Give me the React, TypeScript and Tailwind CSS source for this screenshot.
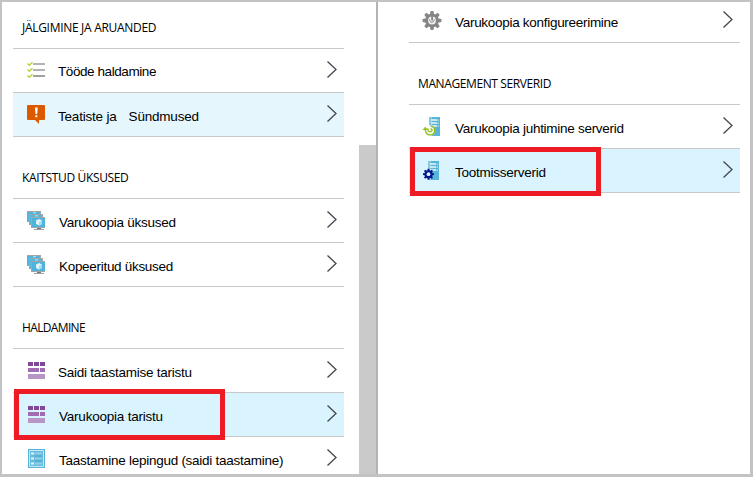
import type { ReactNode } from "react";

function ChecklistIcon() {
  return (
    <svg width="20" height="20" viewBox="0 0 20 20" fill="none">
      {[2, 8, 14].map((y) => (
        <g key={y}>
          <path d={`M1.500 ${y + 0.6}l1.800 1.700L6.500 ${y - 0.8}`} stroke="#b8d532" strokeWidth="1.4" />
          <path d={`M7 ${y + 1}h12`} stroke={y === 14 ? "#a0a0a0" : "#b4b4b4"} strokeWidth="2" />
        </g>
      ))}
    </svg>
  );
}

function AlertIcon() {
  return (
    <svg width="20" height="20" viewBox="0 0 20 20">
      <path d="M2 0h16a1 1 0 0 1 1 1v13a1 1 0 0 1-1 1h-5v4l-4-4H2a1 1 0 0 1-1-1V1a1 1 0 0 1 1-1z" fill="#dd5900" />
      <path d="M8.900 2.500h2.900l-.6 6.500H9.500zM9.300 10.200h2v2h-2z" fill="#fff" />
    </svg>
  );
}

function MonitorsIcon() {
  return (
    <svg width="20" height="20" viewBox="0 0 20 20">
      <path d="M1 0h14v11H1z" fill="#a3a6a8" />
      <path d="M1 1h13v9H1z" fill="#4fb4dc" />
      <path d="M3 3h14v11H3z" fill="#a3a6a8" />
      <path d="M4 4h12v9H4z" fill="#59b4d9" />
      <path d="M7 1.700h3M9 4.900h3" stroke="#bfe6f4" />
      <path d="M5 6h14v11H5z" fill="#a3a6a8" />
      <path d="M6 7h13v9H6z" fill="#4fb4dc" />
      <path d="M13 8l3 1.500v3.400l-3 1.500-3-1.500V9.500z" fill="#e0f4fb" />
      <path d="M13 11l3-1.500v3.400l-3 1.500z" fill="#a9dcef" />
      <path d="M11 17h4v1h-4z" fill="#74787b" />
      <path d="M8 18h10v1H8z" fill="#9da0a2" />
    </svg>
  );
}

function BlocksIcon() {
  return (
    <svg width="20" height="20" viewBox="0 0 20 20">
      <path d="M2 1h5v4H2zM8 1h5v4H8zM14 1h5v4h-5z" fill="#804998" />
      <path d="M2 7h11v4H2zM14 7h5v4h-5z" fill="#a06db3" />
      <path d="M2 13h17v5H2z" fill="#b796c6" />
    </svg>
  );
}

function PlanIcon() {
  return (
    <svg width="20" height="20" viewBox="0 0 20 20">
      <path d="M2 0h17v19H2z" fill="#59b4d9" />
      <path d="M3.500 1.500h14v16h-14z" fill="#6bbddd" stroke="#c5e7f3" />
      <path d="M5 4.500h3M5 9.500h3M5 14.500h3" stroke="#e0f4fa" strokeWidth="2" />
      <path d="M9 4.500h7M9 9.500h7M9 14.500h7" stroke="#8fcfe8" strokeWidth="2" />
      <path d="M9 7h7M9 12h7" stroke="#3fa3cd" />
    </svg>
  );
}

function GearIcon() {
  return (
    <svg width="20" height="20" viewBox="0 0 20 20">
      <g transform="translate(10 9.500)" fill="#858585">
        {[0, 45, 90, 135, 180, 225, 270, 315].map((a) => (
          <path key={a} d="M-2.200-5.500L-1.400-9.400H1.400L2.200-5.500z" transform={`rotate(${a})`} />
        ))}
        <circle r="6.8" />
        <circle r="3.9" fill="#f2f2f2" />
        <path d="M-.8-4.400H1V0H-.8z" />
        <path d="M-2.300-1.200a2.300 2.300 0 1 0 4.400 0" fill="none" stroke="#858585" strokeWidth="1" />
      </g>
    </svg>
  );
}

function ServerBody() {
  return (
    <>
      <path d="M7 0h11v19H7z" fill="#59b4d9" />
      <path d="M7 0h3v19H7z" fill="#85c9e3" />
      <path d="M9 3h8M9 6h8M9 9h8" stroke="#e6f6fb" strokeWidth="1.6" />
      <path d="M15 2.200h1.500v1.200H15zM15 5.200h1.500v1.200H15zM15 8.200h1.500v1.200H15z" fill="#4aa7cf" />
    </>
  );
}

function RestoreServerIcon() {
  return (
    <svg width="20" height="20" viewBox="0 0 20 20" fill="none">
      <ServerBody />
      <circle cx="8" cy="13.500" r="5.200" fill="#fff" />
      <path d="M3.200 11.500c-.1 4 1.900 6.400 4.800 6.400 3 0 4.600-2.100 4.600-4.500 0-2.700-1.800-4.300-4-4.200M5.800 11.200c-.2 2.300.8 3.700 2.300 3.700 1.200 0 2-.8 1.900-1.900-.1-.9-.8-1.200-1.600-1" stroke="#92c01f" strokeWidth="1.4" />
      <path d="M.5 13l2.700-3.200L6 13z" fill="#92c01f" />
    </svg>
  );
}

function ServerGearIcon() {
  return (
    <svg width="20" height="20" viewBox="0 0 20 20">
      <g transform="translate(-1 0)">
        <ServerBody />
      </g>
      <g transform="translate(6.500 13.200)" fill="#00188f">
        {[0, 45, 90, 135, 180, 225, 270, 315].map((a) => (
          <path key={a} d="M-1.200-3L-.9-5.500H.9L1.200-3z" transform={`rotate(${a})`} />
        ))}
        <circle r="4" />
        <circle r="1.9" fill="#d9f4fe" />
      </g>
    </svg>
  );
}

function Heading({ className, children }: { className: string; children: ReactNode }) {
  return (
    <div className={`border-b border-[#c8c8c8] whitespace-pre font-['Open_Sans',sans-serif] text-[12px] leading-4 text-black ${className}`}>
      {children}
    </div>
  );
}

function Row({ icon, className = "", textClass, children }: { icon: ReactNode; className?: string; textClass: string; children: ReactNode }) {
  return (
    <div className="h-11 shrink-0 border-b border-[#c8c8c8]">
      <div className={`flex h-[43px] items-start ${className}`}>
        <span className="ml-[13px] mt-3 w-5 shrink-0">{icon}</span>
        <span className={`grow whitespace-pre text-[13.5px] leading-4 ${textClass}`}>{children}</span>
        <svg className="mr-[7px] mt-3 shrink-0" width="10" height="17" viewBox="0 0 10 17" fill="none">
          <path d="M.500.500l8.500 8-8.500 8" stroke="#454850" strokeWidth="1.3" />
        </svg>
      </div>
    </div>
  );
}

export default function App() {
  return (
    <div className="relative flex h-[477px] w-[753px] overflow-hidden border-[3px] border-t-2 border-l-2 border-[#c3c3c3] bg-white font-['Liberation_Sans',Arial,sans-serif] text-black">
      <section className="flex w-[374px] shrink-0 justify-between">
        <div className="ml-[11px] w-[331px]">
          <Heading className="h-[47px] pl-[9px] pt-[18px] tracking-[-0.3px]">JÄLGIMINE JA ARUANDED</Heading>
          <Row icon={<ChecklistIcon />} textClass="mt-[15px] ml-3 tracking-[-0.42px]">Tööde haldamine</Row>
          <Row icon={<AlertIcon />} className="bg-[#e5f6fd]" textClass="mt-4 ml-3 tracking-[-0.2px]">
            Teatiste ja<span className="ml-3">Sündmused</span>
          </Row>
          <Heading className="h-[62px] pl-[9px] pt-[33px] tracking-[-0.35px]">KAITSTUD ÜKSUSED</Heading>
          <Row icon={<MonitorsIcon />} textClass="mt-4 ml-[13px] tracking-[-0.26px]">Varukoopia üksused</Row>
          <Row icon={<MonitorsIcon />} textClass="mt-4 ml-[13px] tracking-[-0.3px]">Kopeeritud üksused</Row>
          <Heading className="h-[62px] pl-[9px] pt-[33px] tracking-[-0.65px]">HALDAMINE</Heading>
          <Row icon={<BlocksIcon />} textClass="mt-4 ml-3 tracking-[-0.24px]">Saidi taastamise taristu</Row>
          <Row icon={<BlocksIcon />} className="bg-[#d9f4fe]" textClass="mt-4 ml-[13px] tracking-[-0.22px]">Varukoopia taristu</Row>
          <Row icon={<PlanIcon />} textClass="mt-4 ml-[13px] tracking-[-0.26px]">Taastamine lepingud (saidi taastamine)</Row>
        </div>
        <div className="mt-[143px] h-[329px] w-[17px] bg-[#cacaca]" />
      </section>
      <div className="w-0.5 shrink-0 bg-[#b3b3b3]" />
      <section className="ml-[31px] w-[331px] shrink-0">
        <div className="-mt-[3px]">
          <Row icon={<GearIcon />} textClass="mt-4 ml-[13px] tracking-[-0.29px]">Varukoopia konfigureerimine</Row>
        </div>
        <Heading className="h-[62px] pl-[9px] pt-[33px] tracking-[-0.4px]">MANAGEMENT SERVERID</Heading>
        <Row icon={<RestoreServerIcon />} textClass="mt-4 ml-[13px] tracking-[-0.28px]">Varukoopia juhtimine serverid</Row>
        <Row icon={<ServerGearIcon />} className="bg-[#d9f4fe]" textClass="mt-4 ml-[13px] tracking-[-0.26px]">Tootmisserverid</Row>
      </section>
      <div className="absolute left-[12px] top-[387px] h-[51px] w-[211px] border-[5px] border-[#ed1c24]" />
      <div className="absolute left-[408px] top-[145px] h-[49px] w-[191px] border-[5px] border-[#ed1c24]" />
    </div>
  );
}
